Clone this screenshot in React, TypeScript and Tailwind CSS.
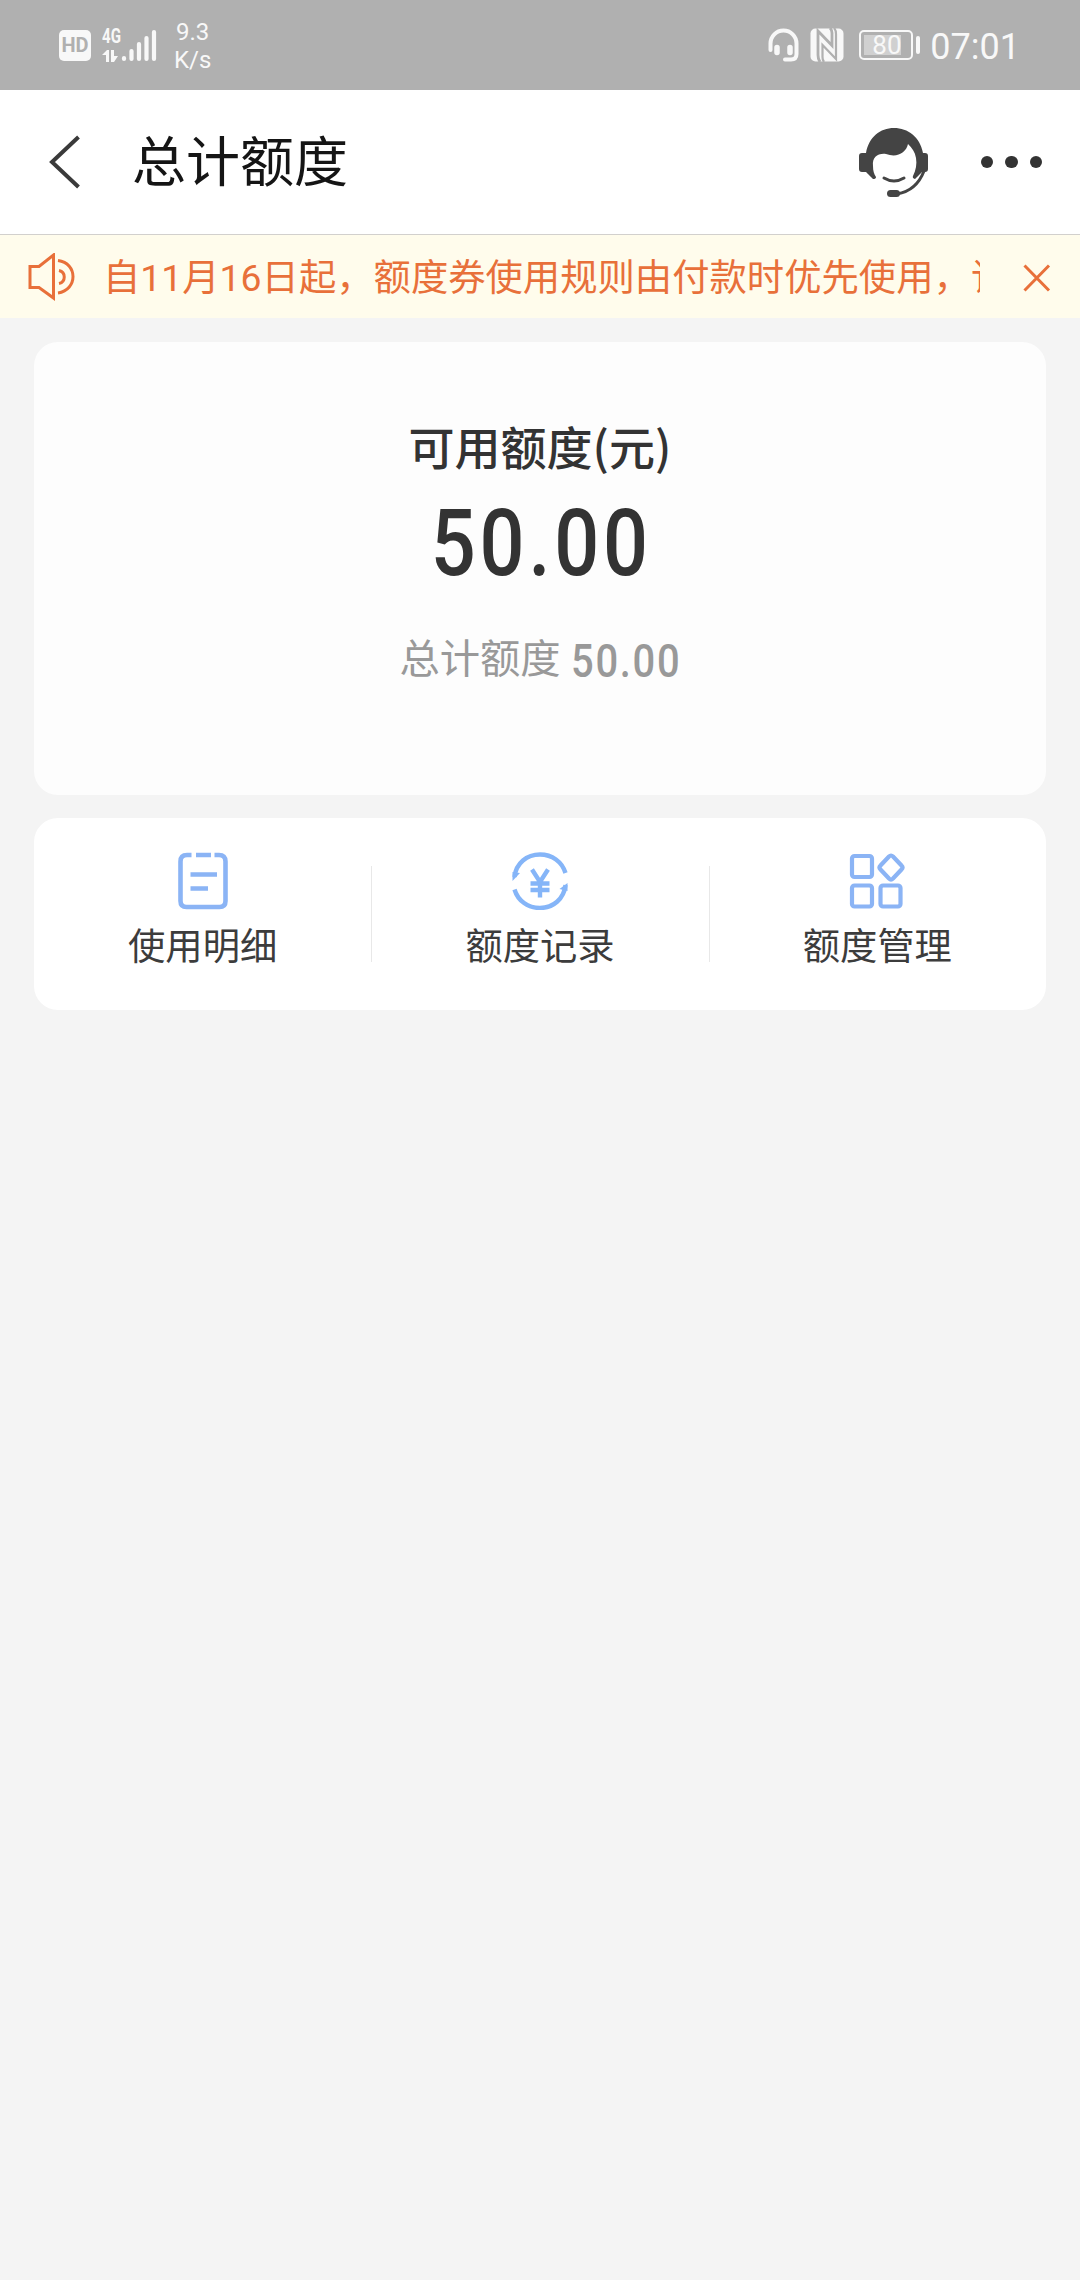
import React from 'react';

function StatusBar() {
  return (
    <header className="flex h-[90px] items-center justify-between bg-[#b0b0b0] pl-[59px] pr-[60px] text-[#f8f8f8]">
      <div className="flex items-center">
        <div className="flex h-[31px] w-8 items-center justify-center rounded-[5px] bg-[#f8f8f8] font-['Roboto'] text-[20px] font-bold leading-none text-[#b0b0b0]">
          HD
        </div>
        <div className="ml-[11px] flex h-[35px] items-end">
          <div className="flex h-[35px] w-[19px] flex-col">
            <span className="origin-left scale-x-[.72] font-['Roboto'] text-[21px] font-bold leading-[17px]">4G</span>
            <svg className="mt-[5px]" width="18" height="12" viewBox="0 0 18 12" fill="currentColor">
              <path d="M0 5 5 0H7V12H4V5ZM9 0h3v6h4l-4 6H9Z" />
            </svg>
          </div>
          <svg width="36" height="35" viewBox="0 0 36 35" stroke="currentColor" strokeWidth="4.2" strokeLinecap="round">
            <path d="M3 31v-1M10.500 31V23M18 31V16M25.500 31V10M33 31V4" />
          </svg>
        </div>
        <div className="ml-[17px] pt-px font-['Roboto'] text-[24px] leading-7">
          <p className="pl-0.5">9.3</p>
          <p>K/s</p>
        </div>
      </div>
      <div className="flex items-center">
        <svg width="31" height="34" viewBox="0 0 31 34" fill="none" stroke="currentColor" strokeLinecap="round">
          <path d="M2.500 22V15.500a13 13 0 0 1 26 0V26q0 5.500-5.500 5.500H17" strokeWidth="4" />
          <path d="M9 19.500v5M22 19.500v5" strokeWidth="5.500" />
        </svg>
        <svg className="ml-[11px]" width="34" height="34" viewBox="0 0 34 34">
          <rect x="0.500" y="0.500" width="33" height="33" rx="5" fill="#f8f8f8" />
          <path d="M10 34Q8 31 8 27V3L22 17.500V5Q22 2 20 0" fill="none" stroke="#b0b0b0" strokeWidth="2.800" />
          <path d="M24 0Q26 2 26 6V31L12.500 17V29Q12.500 32 14 34" fill="none" stroke="#b0b0b0" strokeWidth="2.200" />
        </svg>
        <div className="ml-[15px] flex items-center">
          <div className="flex h-[30px] w-[54px] rounded-[5px] border-2 border-current p-[3px]">
            <div className="flex h-full w-[37px] items-center bg-[#d0d0d0] pl-[8px] font-['Roboto'] text-[26px] leading-none">80</div>
          </div>
          <div className="ml-[3px] h-[18px] w-1 rounded-sm bg-current" />
        </div>
        <span className="ml-[10px] pt-[3px] font-['Roboto'] text-[36px] leading-none">07:01</span>
      </div>
    </header>
  );
}

function TitleBar() {
  return (
    <div className="flex h-[145px] items-center border-b border-[#d2d0cd] bg-white pl-[49px] pr-[38px]">
      <svg width="32" height="54" viewBox="0 0 32 54" fill="none" stroke="#3a3a3a" strokeWidth="4">
        <path d="M29.500 2 3 27 29.500 52" />
      </svg>
      <h1 className="ml-[51px] flex-1 pt-[3px] text-[54px] leading-[72px] text-[#151515]">总计额度</h1>
      <svg width="70" height="70" viewBox="0 0 70 70" fill="#444">
        <path d="M7 26C10 10 21 1 35 1s26 9 29 25h2q3 0 3 3v13q0 3-3 3h-3L56 52q-3-1-2-3c3-6 4-12 3-18-1-6-4-10-8-14-2 9-11 14-22 10-8-1-14 3-13 12 0 5 1 8 3 11q0 2-3 2L7 45H3q-3 0-3-3V29q0-3 3-3Z" />
        <path d="M65 44C60 57 50 65 38 67M25 51q10 6 20 0" fill="none" stroke="#444" strokeWidth="3" strokeLinecap="round" />
        <rect x="28" y="63" width="13" height="7" rx="3.500" />
      </svg>
      <div className="ml-[52px] flex gap-3">
        <i className="size-[12.500px] rounded-full bg-[#333]" />
        <i className="size-[12.500px] rounded-full bg-[#333]" />
        <i className="size-[12.500px] rounded-full bg-[#333]" />
      </div>
    </div>
  );
}

function Notice() {
  return (
    <div className="flex h-[83px] items-center bg-[#fffcec] text-[#e8703a]">
      <svg className="ml-7 mt-px shrink-0" width="48" height="48" viewBox="0 0 48 48" fill="none" stroke="currentColor" strokeWidth="3">
        <path d="M2 13.500H11L25.500 2V45L11 34.500H2ZM30 7.500C50 10 50 37 30 40M31 17.500C38 19 38 29 31 30.500" />
      </svg>
      <p className="ml-[27px] w-[877px] overflow-hidden whitespace-nowrap pt-[3px] text-[37.350px] leading-[56px]">
        自11月16日起，额度券使用规则由付款时优先使用，订单
      </p>
      <svg className="ml-[43px] mt-0.5 shrink-0" width="28" height="28" viewBox="0 0 28 28" stroke="currentColor" strokeWidth="3">
        <path d="M1.500 1.500 26 26.500M26 1.500 1.500 26.500" />
      </svg>
    </div>
  );
}

function DetailIcon() {
  return (
    <svg width="58" height="58" viewBox="0 0 58 58" fill="none" stroke="#8bb4f5" strokeWidth="4.600">
      <path d="M17.500 3H13Q6.500 3 6.500 9.500V49Q6.500 55 12.500 55H45.500Q51.500 55 51.500 49V9.500Q51.500 3 45 3H40.500M22 3H37M16.500 22.500H43M16.500 36.500H34" />
    </svg>
  );
}

function RecordIcon() {
  return (
    <svg width="58" height="58" viewBox="0 0 58 58" fill="none" stroke="#85b5f8" strokeWidth="4.400">
      <path d="M3.500 25C5 11 16 2.500 29 2.500C41 2.500 51 9.500 54.500 21M3.500 37.500C7 49 17 56 29 56C42 56 53 47 54.500 33" />
      <path d="M1.500 20 9 21 1.500 29ZM56.500 31V39L48.500 37Z" fill="#85b5f8" stroke="none" />
      <path d="M21 17.500 29 30 37 17.500M29 29V45.500M19.500 31.500H38.500M19.500 38H38.500" />
    </svg>
  );
}

function ManageIcon() {
  return (
    <svg width="58" height="58" viewBox="0 0 58 58" fill="none" stroke="#8bb4f5" strokeWidth="4.200" strokeLinejoin="round">
      <rect x="4" y="4" width="20" height="21" rx="2.500" />
      <rect x="4" y="33.500" width="20" height="21" rx="2.500" />
      <rect x="32.500" y="33.500" width="20" height="21" rx="2.500" />
      <path d="M43 3.500q1 0 2 1L53.500 13.500q2 2 0 4L45 26.500q-2 2-4 0L32.500 17.500q-2-2 0-4L41 4.500q1-1 2-1Z" />
    </svg>
  );
}

const actions = [
  { label: '使用明细', icon: <DetailIcon /> },
  { label: '额度记录', icon: <RecordIcon /> },
  { label: '额度管理', icon: <ManageIcon /> },
];

export default function App() {
  return (
    <div className="min-h-[2280px] w-[1080px] bg-[#f4f4f4] font-['Roboto','Noto_Sans_CJK_SC',sans-serif]">
      <StatusBar />
      <TitleBar />
      <Notice />
      <main className="flex flex-col gap-[23px] px-[34px] pt-6">
        <section className="flex h-[453px] flex-col items-center rounded-[24px] bg-[#fdfdfd] text-[#333]">
          <h2 className="mt-[69px] font-['Noto_Sans_CJK_SC',sans-serif] text-[46px] font-medium leading-[68px]">可用额度(元)</h2>
          <p className="mt-[18px] scale-x-[.86] pl-1 text-[92px] font-medium leading-[94px] tracking-[4.500px]">50.00</p>
          <p className="mt-[38px] flex items-center text-[40.300px] leading-[60px] text-[#999]">
            总计额度
            <span className="ml-2.5 w-[110px] origin-left scale-x-[.85] pt-0.5 text-[47px] font-medium tracking-[2px]">50.00</span>
          </p>
        </section>
        <nav className="flex h-[192px] rounded-[24px] bg-white">
          {actions.map((action, index) => (
            <div key={action.label} className="flex flex-1 items-center">
              <button className="flex h-full flex-1 flex-col items-center pt-[34px] text-[37.300px] leading-[54px] text-[#3c3c3c]">
                {action.icon}
                <span className="mt-[10px]">{action.label}</span>
              </button>
              {index < 2 && <i className="-mr-px h-24 w-px bg-[#e8e8e8]" />}
            </div>
          ))}
        </nav>
      </main>
    </div>
  );
}
